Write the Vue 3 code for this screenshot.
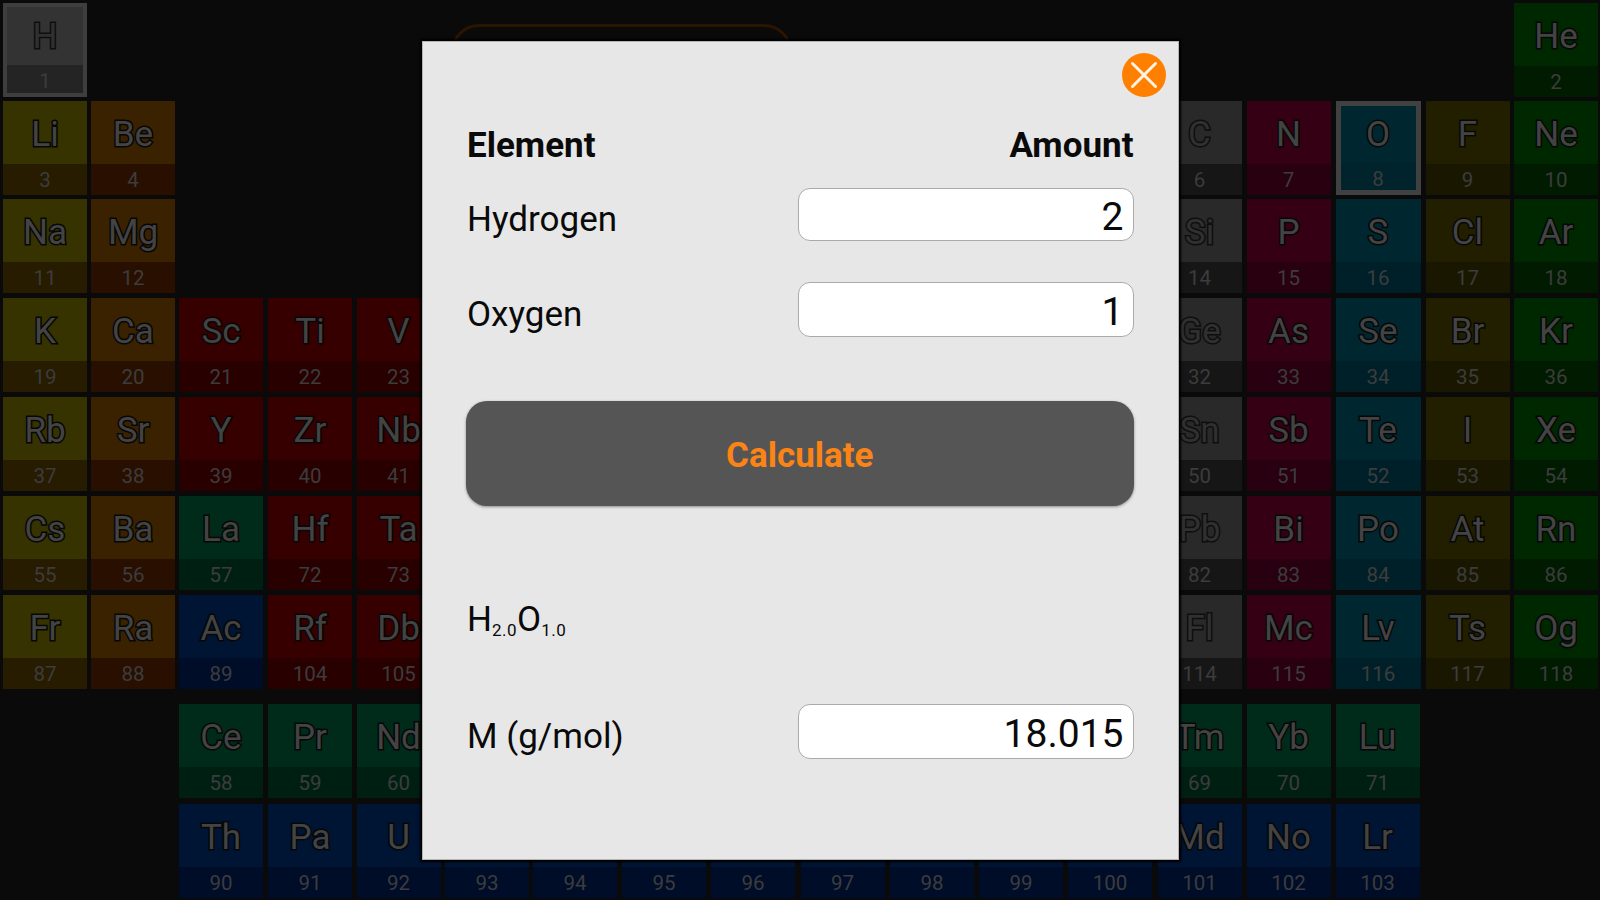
<script setup>
import { ref } from 'vue'

const G = 'gray', Y = 'alkali', O = 'earth', R = 'metal', L = 'lanth', B = 'actin'
const P = 'pnict', C = 'chalc', H = 'halo', N = 'noble'

// [symbol, number, column, row, family, selected]
const cells = [
  ['H', 1, 1, 1, G, true], ['He', 2, 18, 1, N],
  ['Li', 3, 1, 2, Y], ['Be', 4, 2, 2, O], ['C', 6, 14, 2, G], ['N', 7, 15, 2, P], ['O', 8, 16, 2, C, true], ['F', 9, 17, 2, H], ['Ne', 10, 18, 2, N],
  ['Na', 11, 1, 3, Y], ['Mg', 12, 2, 3, O], ['Si', 14, 14, 3, G], ['P', 15, 15, 3, P], ['S', 16, 16, 3, C], ['Cl', 17, 17, 3, H], ['Ar', 18, 18, 3, N],
  ['K', 19, 1, 4, Y], ['Ca', 20, 2, 4, O], ['Sc', 21, 3, 4, R], ['Ti', 22, 4, 4, R], ['V', 23, 5, 4, R],
  ['Ge', 32, 14, 4, G], ['As', 33, 15, 4, P], ['Se', 34, 16, 4, C], ['Br', 35, 17, 4, H], ['Kr', 36, 18, 4, N],
  ['Rb', 37, 1, 5, Y], ['Sr', 38, 2, 5, O], ['Y', 39, 3, 5, R], ['Zr', 40, 4, 5, R], ['Nb', 41, 5, 5, R],
  ['Sn', 50, 14, 5, G], ['Sb', 51, 15, 5, P], ['Te', 52, 16, 5, C], ['I', 53, 17, 5, H], ['Xe', 54, 18, 5, N],
  ['Cs', 55, 1, 6, Y], ['Ba', 56, 2, 6, O], ['La', 57, 3, 6, L], ['Hf', 72, 4, 6, R], ['Ta', 73, 5, 6, R],
  ['Pb', 82, 14, 6, G], ['Bi', 83, 15, 6, P], ['Po', 84, 16, 6, C], ['At', 85, 17, 6, H], ['Rn', 86, 18, 6, N],
  ['Fr', 87, 1, 7, Y], ['Ra', 88, 2, 7, O], ['Ac', 89, 3, 7, B], ['Rf', 104, 4, 7, R], ['Db', 105, 5, 7, R],
  ['Fl', 114, 14, 7, G], ['Mc', 115, 15, 7, P], ['Lv', 116, 16, 7, C], ['Ts', 117, 17, 7, H], ['Og', 118, 18, 7, N],
  ['Ce', 58, 3, 9, L], ['Pr', 59, 4, 9, L], ['Nd', 60, 5, 9, L], ['Tm', 69, 14, 9, L], ['Yb', 70, 15, 9, L], ['Lu', 71, 16, 9, L],
  ['Th', 90, 3, 10, B], ['Pa', 91, 4, 10, B], ['U', 92, 5, 10, B],
  ...[93, 94, 95, 96, 97, 98, 99, 100].map((n, i) => ['', n, 6 + i, 10, B]),
  ['Md', 101, 14, 10, B], ['No', 102, 15, 10, B], ['Lr', 103, 16, 10, B]
].map(([symbol, number, col, row, family, selected]) => ({ symbol, number, col, row, family, selected }))

const hydrogen = ref('2')
const oxygen = ref('1')
const mass = ref('18.015')
</script>

<template>
  <div class="screen">
    <div class="table">
      <div
        v-for="c in cells"
        :key="c.number"
        class="cell"
        :class="[c.family, { selected: c.selected }]"
        :style="{ gridColumn: c.col, gridRow: c.row }"
      >
        <div class="symbol">{{ c.symbol }}</div>
        <div class="number">{{ c.number }}</div>
      </div>
    </div>
    <div class="outline-box"></div>

    <section class="modal">
      <button class="close" aria-label="Close">
        <svg viewBox="0 0 44 44" width="44" height="44">
          <circle cx="22" cy="22" r="22" fill="#ff7f00" />
          <path d="M10.5 10.5 33.5 33.5M33.5 10.5 10.5 33.5" stroke="#fff4e6" stroke-width="3" stroke-linecap="round" />
        </svg>
      </button>
      <div class="head"><span>Element</span><span>Amount</span></div>
      <div class="row hydrogen"><label>Hydrogen</label><input v-model="hydrogen" /></div>
      <div class="row oxygen"><label>Oxygen</label><input v-model="oxygen" /></div>
      <button class="calc">Calculate</button>
      <div class="formula">H<span class="sub">2.0</span>O<span class="sub">1.0</span></div>
      <div class="row mass"><label>M (g/mol)</label><input v-model="mass" readonly /></div>
    </section>
  </div>
</template>

<style>
html, body { margin: 0; background: #0a0a0a; overflow: hidden; }
</style>

<style scoped>
* { box-sizing: border-box; }
.screen {
  position: relative;
  width: 1600px;
  height: 900px;
  overflow: hidden;
  background: #0a0a0a;
  font-family: Roboto, "Liberation Sans", sans-serif;
}
.table {
  display: grid;
  padding: 3px 0 0 3px;
  grid-template-columns: 88px 88px 89px 88.5px 88.5px 88px 89px 89px 89.5px 89.5px 89px 89px 89.5px 89px 89px 90px 88.5px 88px;
  grid-template-rows: 98px 98px 99px 99px 99px 99px 95px 14px 100px 98px;
}
.cell {
  width: 84px;
  height: 94px;
  text-align: center;
  display: flex;
  flex-direction: column;
  background: var(--top);
}
.symbol {
  height: 63px;
  flex: none;
  line-height: 68px;
  font-size: 35px;
  color: #434343;
  -webkit-text-stroke: 3px #070707;
  paint-order: stroke fill;
}
.number {
  height: 31px;
  flex: none;
  line-height: 33px;
  font-size: 20.5px;
  color: #3c3c3c;
  background: var(--strip);
}
.gray { --top: #292929; --strip: #161616; }
.gray .symbol { color: #303030; -webkit-text-stroke-color: #0e0e0e; }
.alkali { --top: #363300; --strip: #271b00; }
.earth { --top: #3a2200; --strip: #290f00; }
.metal { --top: #370000; --strip: #280000; }
.lanth { --top: #002b1a; --strip: #001f13; }
.actin { --top: #001433; --strip: #000d29; }
.pnict { --top: #360014; --strip: #280010; }
.chalc { --top: #002730; --strip: #002029; width: 85px; }
.halo { --top: #221f00; --strip: #1a1700; }
.noble { --top: #002800; --strip: #001b00; }
.selected { border: 4px solid #3e3e3e; }
.selected .symbol { height: 58px; line-height: 59px; }
.selected .number { height: 28px; line-height: 32px; }
.selected.gray { --top: #333; --strip: #242424; }
.selected.chalc { border-width: 5px; border-color: #414141; --strip: #00232c; }
.selected.chalc .symbol { height: 57px; line-height: 57px; }
.selected.chalc .number { height: 27px; line-height: 33px; }

.outline-box {
  position: absolute;
  left: 451px;
  top: 24px;
  width: 341px;
  height: 60px;
  border: 3px solid #2c1500;
  border-radius: 28px;
}

.modal {
  position: absolute;
  left: 422px;
  top: 41px;
  width: 756.5px;
  height: 819px;
  padding: 0 44px;
  background: #e7e7e7;
  border: 1px solid #b5b5b5;
  box-shadow: 0 0 2px 2px #000;
  color: #0a0a0a;
  font-size: 35px;
  display: flex;
  flex-direction: column;
}
button { border: 0; padding: 0; background: none; font-family: inherit; }
.close { width: 44px; height: 44px; margin: 11px -32.5px 0 auto; align-self: flex-end; }
.close svg { display: block; fill: none; }
.head {
  display: flex;
  justify-content: space-between;
  height: 41px;
  line-height: 43px;
  margin-top: 27px;
  font-weight: 700;
}
.row { display: flex; justify-content: space-between; height: 55px; }
label { line-height: 66px; }
input {
  width: 336px;
  height: 100%;
  padding: 4px 9px 0 9px;
  border: 1.5px solid #aaa;
  border-radius: 12px;
  background: #fff;
  color: #0a0a0a;
  font: 39px Roboto, "Liberation Sans", sans-serif;
  line-height: 47px;
  text-align: right;
  outline: none;
}
.hydrogen { height: 53px; margin-top: 23px; }
.hydrogen label { line-height: 64px; }
.oxygen { margin-top: 41px; }
.calc {
  height: 105px;
  flex: none;
  margin-top: 64px;
  margin-left: -1px;
  border-radius: 21px;
  background: #555;
  color: #fb8415;
  font-size: 35px;
  font-weight: 700;
  line-height: 109px;
  box-shadow: 0 1px 3px #0006;
}
.formula { height: 42px; line-height: 46px; margin-top: 91px; display: flex; }
.sub { font-size: 17px; letter-spacing: .5px; line-height: 67px; }
.mass { margin-top: 65px; }
</style>
